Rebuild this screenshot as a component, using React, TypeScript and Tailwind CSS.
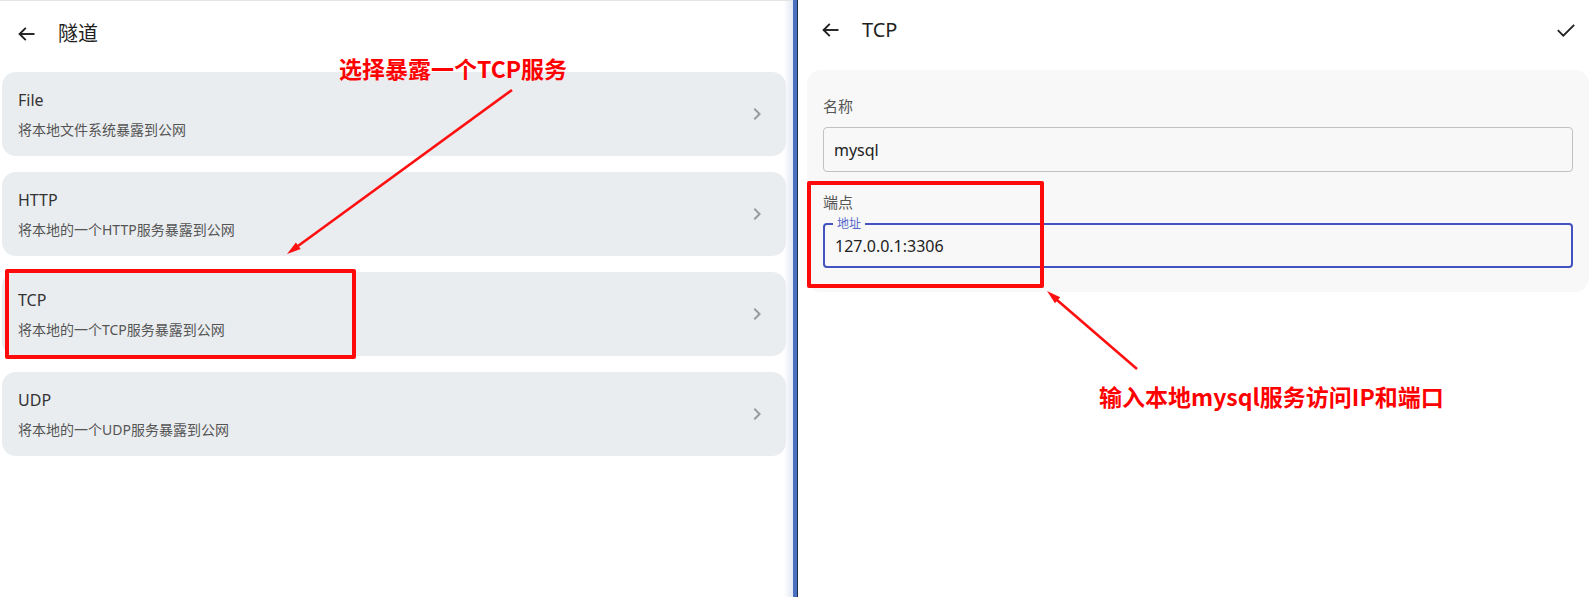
import React from "react";

const UI_FONT = { fontFamily: '"Noto Sans", "Noto Sans CJK SC", sans-serif' };
const CJK_BOLD = { fontFamily: '"Noto Sans CJK SC", "Noto Sans", sans-serif' };

function BackArrow() {
  return (
    <svg width="17" height="14" viewBox="0 0 17 14" fill="none" className="shrink-0">
      <path d="M1.5 7H16.5" stroke="#1f1f1f" strokeWidth="1.9" />
      <path d="M7.8 0.9L1.6 7L7.8 13.1" stroke="#1f1f1f" strokeWidth="1.9" />
    </svg>
  );
}

function Chevron() {
  return (
    <svg width="24" height="24" viewBox="0 0 24 24" className="shrink-0">
      <path d="M10 6 8.59 7.41 13.17 12l-4.58 4.59L10 18l6-6z" fill="#9a9a9a" />
    </svg>
  );
}

const items = [
  { title: "File", desc: "将本地文件系统暴露到公网" },
  { title: "HTTP", desc: "将本地的一个HTTP服务暴露到公网" },
  { title: "TCP", desc: "将本地的一个TCP服务暴露到公网" },
  { title: "UDP", desc: "将本地的一个UDP服务暴露到公网" },
];

export default function App() {
  return (
    <div className="relative flex w-[1594px] h-[597px] overflow-hidden bg-white" style={UI_FONT}>
      {/* Left panel */}
      <div className="relative flex flex-col w-[793px] h-full border-t border-[#e4e4e4] bg-gradient-to-r from-white from-[98.8%] to-[#e3e8f3]">
        <div className="flex items-center h-[65px] pl-[18px]">
          <BackArrow />
          <span className="ml-[23px] text-[20px] leading-none text-[#1f1f1f]">隧道</span>
        </div>
        <div className="flex flex-col gap-[16px] mt-[6px] pl-[2px] pr-[7px]">
          {items.map((it) => (
            <div
              key={it.title}
              className="flex items-center h-[84px] rounded-[14px] bg-[#eaedf0] pl-[16px] pr-[17px]"
            >
              <div className="flex flex-col flex-1">
                <div className="text-[16px] leading-[24px] text-[#333]">{it.title}</div>
                <div className="mt-[8px] text-[14px] leading-[20px] text-[#555]">{it.desc}</div>
              </div>
              <Chevron />
            </div>
          ))}
        </div>
      </div>

      {/* Divider */}
      <div className="w-[4px] h-full bg-[#4a70c2]" />
      <div className="w-[1px] h-full bg-[#1d2a48]" />

      {/* Right panel */}
      <div className="flex flex-col flex-1 h-full bg-white">
        <div className="flex items-center h-[60px] pl-[24px] pr-[19px]">
          <BackArrow />
          <span className="ml-[23px] text-[20px] leading-none text-[#1f1f1f]">TCP</span>
          <div className="flex-1" />
          <svg width="18" height="13" viewBox="0 0 18 13" fill="none">
            <path d="M0.8 6.2L6.3 11.7L17.2 0.8" stroke="#1f1f1f" strokeWidth="1.8" />
          </svg>
        </div>
        <div className="mt-[10px] ml-[9px] mr-[5px] rounded-[14px] bg-[#f8f8f8] px-[16px] pt-[26px] pb-[24px]">
          <div className="text-[15px] leading-[20px] text-[#555]">名称</div>
          <div className="mt-[11px] flex items-center h-[45px] rounded-[4px] border border-[#c2c2c2] pl-[10px] text-[16px] text-[#222]">
            mysql
          </div>
          <div className="mt-[20px] text-[15px] leading-[20px] text-[#555]">端点</div>
          <div className="relative mt-[11px] flex items-center h-[45px] rounded-[4px] border-2 border-[#4453bf] pl-[10px] text-[16px] text-[#222]">
            <span className="absolute left-[8px] top-[-8px] px-[4px] bg-[#f8f8f8] text-[12px] leading-[14px] text-[#5566c8]">
              地址
            </span>
            127.0.0.1:3306
          </div>
        </div>
      </div>

      {/* Annotations */}
      <div className="absolute left-[5px] top-[269px] w-[351px] h-[90px] border-4 border-[#ff0a0a] rounded-[2px] pointer-events-none" />
      <div className="absolute left-[807px] top-[181px] w-[237px] h-[107px] border-4 border-[#ff0a0a] rounded-[2px] pointer-events-none" />

      <div
        className="absolute left-[339px] top-[54px] text-[23px] leading-[28px] font-bold text-[#ff0000] whitespace-nowrap"
        style={CJK_BOLD}
      >
        选择暴露一个TCP服务
      </div>
      <div
        className="absolute left-[1099px] top-[382px] text-[23px] leading-[28px] font-bold text-[#ff0000] whitespace-nowrap"
        style={CJK_BOLD}
      >
        输入本地mysql服务访问IP和端口
      </div>

      <svg className="absolute left-0 top-0 pointer-events-none" width="1594" height="597" viewBox="0 0 1594 597">
        <line x1="512" y1="90" x2="298" y2="246" stroke="#ff1010" strokeWidth="2.6" />
        <polygon points="287,254 300.7,249.0 295.9,242.5" fill="#ff1010" />
        <line x1="1137" y1="369" x2="1057" y2="300" stroke="#ff1010" strokeWidth="2.6" />
        <polygon points="1047,291 1060.2,297.2 1055,303.2" fill="#ff1010" />
      </svg>
    </div>
  );
}
